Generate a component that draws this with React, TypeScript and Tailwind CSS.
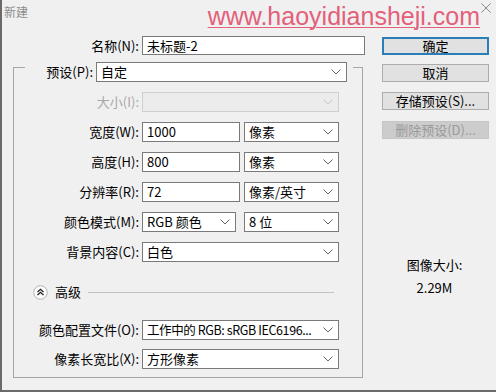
import React from 'react';

const FONT = { fontFamily: '"Noto Sans CJK SC", "Noto Sans", sans-serif' };

const Chevron = ({ light }: { light?: boolean }) => (
  <svg width="10" height="6" viewBox="0 0 10 6" className="shrink-0">
    <path d="M0.5 0.5 L5 5 L9.5 0.5" fill="none" stroke={light ? '#c4c4c4' : '#666'} strokeWidth="1" />
  </svg>
);

const Input = ({ value, width, height = 20 }: { value: string; width: string; height?: number }) => (
  <div
    className={`${width} ${height === 19 ? 'h-[19px] leading-[17px]' : 'h-[20px] leading-[18px]'} border border-[#7a7a7a] bg-white pl-[4px] text-[13px] text-black`}
  >
    {value}
  </div>
);

const Select = ({
  value,
  width,
  disabled,
  textClass = ''
}: {
  value: string;
  width: string;
  disabled?: boolean;
  textClass?: string;
}) => (
  <div
    className={`${width} h-[20px] flex items-center justify-between pl-[4px] pr-[5px] border text-[13px] ${
      disabled ? 'border-[#cfcfcf] bg-[#ececec]' : 'border-[#7a7a7a] bg-white text-black'
    }`}
  >
    <span className={`leading-[18px] whitespace-nowrap ${textClass}`}>{value}</span>
    <Chevron light={disabled} />
  </div>
);

const Label = ({ children, disabled }: { children: React.ReactNode; disabled?: boolean }) => (
  <div className={`w-[125px] text-right text-[13px] leading-[20px] ${disabled ? 'text-[#a8a8a8]' : 'text-black'}`}>
    {children}
  </div>
);

const Row = ({ children, className = '' }: { children: React.ReactNode; className?: string }) => (
  <div className={`flex items-center h-[20px] ${className}`}>{children}</div>
);

const Button = ({
  children,
  primary,
  disabled,
  className = ''
}: {
  children: React.ReactNode;
  primary?: boolean;
  disabled?: boolean;
  className?: string;
}) => (
  <div
    className={`w-[107px] h-[18px] flex items-center justify-center text-[13px] leading-[16px] ${
      primary
        ? 'border-2 border-[#2b7fb8] bg-[#e1e1e1] text-black'
        : disabled
        ? 'border border-[#c6c6c6] bg-[#cccccc] text-[#9a9a9a]'
        : 'border border-[#adadad] bg-[#e1e1e1] text-black'
    } ${className}`}
  >
    {children}
  </div>
);

const CollapseIcon = () => (
  <svg width="15" height="15" viewBox="0 0 15 15" className="shrink-0">
    <circle cx="7.5" cy="7.5" r="6.8" fill="#fbfbfb" stroke="#b5b5b5" strokeWidth="1" />
    <path d="M4.5 7 L7.5 4.3 L10.5 7" fill="none" stroke="#222" strokeWidth="1.3" />
    <path d="M4.5 10 L7.5 7.3 L10.5 10" fill="none" stroke="#222" strokeWidth="1.3" />
  </svg>
);

export default function App() {
  return (
    <div
      className="w-[496px] h-[392px] bg-[#f0f0f0] border-l-2 border-b-2 border-[#6a6a6a] overflow-hidden flex flex-col"
      style={FONT}
    >
      {/* title bar */}
      <div className="h-[30px] flex items-start shrink-0">
        <div className="pl-[2px] pt-[4px] text-[12px] leading-[16px] text-[#8c8c8c]">新建</div>
        <div
          className="ml-auto mt-[1px] text-[25px] leading-[30px] text-[#e3607a] underline decoration-1 underline-offset-2"
          style={{ fontFamily: '"Liberation Sans", Arial, sans-serif' }}
        >
          www.haoyidiansheji.com
        </div>
        <div className="ml-[1px] mr-[5px] mt-[3px]">
          <svg width="10" height="10" viewBox="0 0 10 10">
            <path d="M0.5 0.5 L9.5 9.5 M9.5 0.5 L0.5 9.5" stroke="#8a8a8a" strokeWidth="1" />
          </svg>
        </div>
      </div>

      <div className="flex flex-1">
        {/* left column */}
        <div className="w-[368px] flex flex-col">
          <div className="flex items-center mt-[6px] h-[19px]">
            <div className="w-[137px] text-right text-[13px] leading-[19px] text-black">名称(N):</div>
            <div className="ml-[3px]">
              <Input value="未标题-2" width="w-[223px]" height={19} />
            </div>
          </div>

          {/* group box */}
          <div className="ml-[11px] mt-[12px] w-[350px] h-[311px] border border-[#a6a6a6] flex flex-col">
            <div className="flex items-center h-[20px] -mt-[6px] ml-[11px] mr-[9px] bg-[#f0f0f0]">
              <div className="w-[68px] text-right text-[13px] leading-[20px] text-black">预设(P):</div>
              <div className="ml-[3px]">
                <Select value="自定" width="w-[251px]" />
              </div>
            </div>

            <Row className="mt-[10px]">
              <Label disabled>大小(I):</Label>
              <div className="ml-[3px]">
                <Select value="" width="w-[197px]" disabled />
              </div>
            </Row>

            <Row className="mt-[10px]">
              <Label>宽度(W):</Label>
              <div className="ml-[3px] flex gap-[4px]">
                <Input value="1000" width="w-[98px]" />
                <Select value="像素" width="w-[95px]" />
              </div>
            </Row>

            <Row className="mt-[10px]">
              <Label>高度(H):</Label>
              <div className="ml-[3px] flex gap-[4px]">
                <Input value="800" width="w-[98px]" />
                <Select value="像素" width="w-[95px]" />
              </div>
            </Row>

            <Row className="mt-[10px]">
              <Label>分辨率(R):</Label>
              <div className="ml-[3px] flex gap-[4px]">
                <Input value="72" width="w-[98px]" />
                <Select value="像素/英寸" width="w-[95px]" />
              </div>
            </Row>

            <Row className="mt-[10px]">
              <Label>颜色模式(M):</Label>
              <div className="ml-[3px] flex gap-[8px]">
                <Select value="RGB 颜色" width="w-[94px]" />
                <Select value="8 位" width="w-[95px]" />
              </div>
            </Row>

            <Row className="mt-[10px]">
              <Label>背景内容(C):</Label>
              <div className="ml-[3px]">
                <Select value="白色" width="w-[197px]" />
              </div>
            </Row>

            <div className="flex items-center h-[20px] mt-[20px] ml-[19px]">
              <CollapseIcon />
              <span className="ml-[7px] text-[13px] leading-[20px] text-black">高级</span>
              <div className="ml-[7px] w-[246px] h-px bg-[#c2c2c2]" />
            </div>

            <Row className="mt-[18px]">
              <Label>颜色配置文件(O):</Label>
              <div className="ml-[3px]">
                <Select
                  value="工作中的 RGB: sRGB IEC6196..."
                  width="w-[197px]"
                  textClass="text-[12.5px] tracking-[-0.4px]"
                />
              </div>
            </Row>

            <Row className="mt-[9px]">
              <Label>像素长宽比(X):</Label>
              <div className="ml-[3px]">
                <Select value="方形像素" width="w-[197px]" />
              </div>
            </Row>
          </div>
        </div>

        {/* right column */}
        <div className="flex flex-col ml-[12px]">
          <Button primary className="mt-[7px]">确定</Button>
          <Button className="mt-[9px]">取消</Button>
          <Button className="mt-[10px]">存储预设(S)...</Button>
          <Button disabled className="mt-[11px]">删除预设(D)...</Button>
          <div className="mt-[117px] w-[107px] flex flex-col items-center text-[13px] text-black">
            <div className="leading-[18px] ml-[-2px]">图像大小:</div>
            <div className="leading-[18px] mt-[5px] ml-[-2px]">2.29M</div>
          </div>
        </div>
      </div>
    </div>
  );
}
